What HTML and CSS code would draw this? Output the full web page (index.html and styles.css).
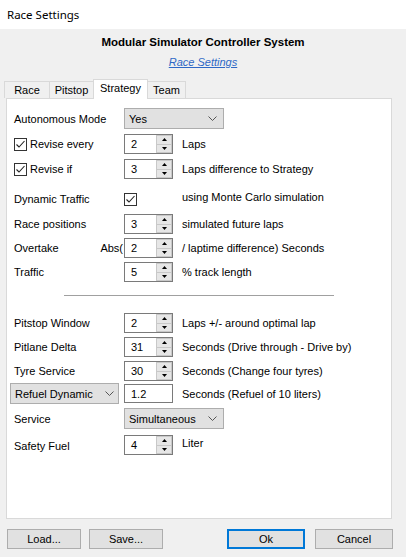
FILE: index.html
```html
<!DOCTYPE html>
<html>
<head>
<meta charset="utf-8">
<link rel="stylesheet" href="styles.css">
</head>
<body>
<div class="window">
  <div class="titlebar">Race Settings</div>
  <div class="header">
    <div class="heading">Modular Simulator Controller System</div>
    <div class="link-row"><a class="link">Race Settings</a></div>
  </div>
  <div class="tabs">
    <div class="tab t-race">Race</div>
    <div class="tab t-pit">Pitstop</div>
    <div class="tab t-strat selected">Strategy</div>
    <div class="tab t-team">Team</div>
  </div>
  <div class="panel">
    <div class="row r-auto">
      <div class="label">Autonomous Mode</div>
      <div class="dropdown dd-wide"><span>Yes</span><svg class="chev" width="9" height="5" viewBox="0 0 9 5"><path d="M0.5 0.5 L4.5 4.5 L8.5 0.5" fill="none" stroke="#555" stroke-width="1"/></svg></div>
    </div>
    <div class="row r-g5">
      <div class="label"><span class="check"><svg width="11" height="11" viewBox="0 0 11 11"><path d="M1.5 5.5 L4 8 L9.5 2" fill="none" stroke="#222" stroke-width="1.1"/></svg></span>Revise every</div>
      <div class="spin"><span class="val">2</span><span class="btns"><span class="up"><svg width="5" height="3" viewBox="0 0 5 3"><path d="M0 3 L2.5 0 L5 3Z" fill="#000"/></svg></span><span class="dn"><svg width="5" height="3" viewBox="0 0 5 3"><path d="M0 0 L2.5 3 L5 0Z" fill="#000"/></svg></span></span></div>
      <div class="note">Laps</div>
    </div>
    <div class="row r-g5">
      <div class="label"><span class="check"><svg width="11" height="11" viewBox="0 0 11 11"><path d="M1.5 5.5 L4 8 L9.5 2" fill="none" stroke="#222" stroke-width="1.1"/></svg></span>Revise if</div>
      <div class="spin"><span class="val">3</span><span class="btns"><span class="up"><svg width="5" height="3" viewBox="0 0 5 3"><path d="M0 3 L2.5 0 L5 3Z" fill="#000"/></svg></span><span class="dn"><svg width="5" height="3" viewBox="0 0 5 3"><path d="M0 0 L2.5 3 L5 0Z" fill="#000"/></svg></span></span></div>
      <div class="note">Laps difference to Strategy</div>
    </div>
    <div class="row r-g10">
      <div class="label">Dynamic Traffic</div>
      <div class="chkcell"><span class="check"><svg width="11" height="11" viewBox="0 0 11 11"><path d="M1.5 5.5 L4 8 L9.5 2" fill="none" stroke="#222" stroke-width="1.1"/></svg></span></div>
      <div class="note up1">using Monte Carlo simulation</div>
    </div>
    <div class="row r-g5">
      <div class="label">Race positions</div>
      <div class="spin"><span class="val">3</span><span class="btns"><span class="up"><svg width="5" height="3" viewBox="0 0 5 3"><path d="M0 3 L2.5 0 L5 3Z" fill="#000"/></svg></span><span class="dn"><svg width="5" height="3" viewBox="0 0 5 3"><path d="M0 0 L2.5 3 L5 0Z" fill="#000"/></svg></span></span></div>
      <div class="note">simulated future laps</div>
    </div>
    <div class="row r-g4">
      <div class="label split"><span>Overtake</span><span>Abs(</span></div>
      <div class="spin"><span class="val">2</span><span class="btns"><span class="up"><svg width="5" height="3" viewBox="0 0 5 3"><path d="M0 3 L2.5 0 L5 3Z" fill="#000"/></svg></span><span class="dn"><svg width="5" height="3" viewBox="0 0 5 3"><path d="M0 0 L2.5 3 L5 0Z" fill="#000"/></svg></span></span></div>
      <div class="note">/ laptime difference) Seconds</div>
    </div>
    <div class="row r-g4">
      <div class="label">Traffic</div>
      <div class="spin"><span class="val">5</span><span class="btns"><span class="up"><svg width="5" height="3" viewBox="0 0 5 3"><path d="M0 3 L2.5 0 L5 3Z" fill="#000"/></svg></span><span class="dn"><svg width="5" height="3" viewBox="0 0 5 3"><path d="M0 0 L2.5 3 L5 0Z" fill="#000"/></svg></span></span></div>
      <div class="note">% track length</div>
    </div>
    <div class="separator"></div>
    <div class="row r-sep">
      <div class="label">Pitstop Window</div>
      <div class="spin"><span class="val">2</span><span class="btns"><span class="up"><svg width="5" height="3" viewBox="0 0 5 3"><path d="M0 3 L2.5 0 L5 3Z" fill="#000"/></svg></span><span class="dn"><svg width="5" height="3" viewBox="0 0 5 3"><path d="M0 0 L2.5 3 L5 0Z" fill="#000"/></svg></span></span></div>
      <div class="note">Laps +/- around optimal lap</div>
    </div>
    <div class="row r-g4">
      <div class="label">Pitlane Delta</div>
      <div class="spin"><span class="val">31</span><span class="btns"><span class="up"><svg width="5" height="3" viewBox="0 0 5 3"><path d="M0 3 L2.5 0 L5 3Z" fill="#000"/></svg></span><span class="dn"><svg width="5" height="3" viewBox="0 0 5 3"><path d="M0 0 L2.5 3 L5 0Z" fill="#000"/></svg></span></span></div>
      <div class="note">Seconds (Drive through - Drive by)</div>
    </div>
    <div class="row r-g4">
      <div class="label">Tyre Service</div>
      <div class="spin"><span class="val">30</span><span class="btns"><span class="up"><svg width="5" height="3" viewBox="0 0 5 3"><path d="M0 3 L2.5 0 L5 3Z" fill="#000"/></svg></span><span class="dn"><svg width="5" height="3" viewBox="0 0 5 3"><path d="M0 0 L2.5 3 L5 0Z" fill="#000"/></svg></span></span></div>
      <div class="note">Seconds (Change four tyres)</div>
    </div>
    <div class="row r-refuel">
      <div class="dropdown dd-label"><span>Refuel Dynamic</span><svg class="chev" width="9" height="5" viewBox="0 0 9 5"><path d="M0.5 0.5 L4.5 4.5 L8.5 0.5" fill="none" stroke="#555" stroke-width="1"/></svg></div>
      <div class="edit"><span class="val">1.2</span></div>
      <div class="note">Seconds (Refuel of 10 liters)</div>
    </div>
    <div class="row r-service">
      <div class="label">Service</div>
      <div class="dropdown dd-wide"><span>Simultaneous</span><svg class="chev" width="9" height="5" viewBox="0 0 9 5"><path d="M0.5 0.5 L4.5 4.5 L8.5 0.5" fill="none" stroke="#555" stroke-width="1"/></svg></div>
    </div>
    <div class="row r-g6">
      <div class="label down2">Safety Fuel</div>
      <div class="spin"><span class="val">4</span><span class="btns"><span class="up"><svg width="5" height="3" viewBox="0 0 5 3"><path d="M0 3 L2.5 0 L5 3Z" fill="#000"/></svg></span><span class="dn"><svg width="5" height="3" viewBox="0 0 5 3"><path d="M0 0 L2.5 3 L5 0Z" fill="#000"/></svg></span></span></div>
      <div class="note up1">Liter</div>
    </div>
  </div>
  <div class="buttons">
    <div class="btn b-load">Load...</div>
    <div class="btn b-save">Save...</div>
    <div class="btn b-ok">Ok</div>
    <div class="btn b-cancel">Cancel</div>
  </div>
</div>
</body>
</html>
```
FILE: styles.css
```css
html, body {
  margin: 0;
  padding: 0;
}
body {
  width: 406px;
  height: 557px;
  background: #f0f0f0;
  font-family: "Liberation Sans", Arial, sans-serif;
  font-size: 11px;
  color: #000;
  overflow: hidden;
}
.window {
  width: 406px;
  height: 557px;
  display: flex;
  flex-direction: column;
}
.titlebar {
  height: 29px;
  line-height: 29px;
  background: #fff;
  padding-left: 7px;
  font-family: "Noto Sans", "Open Sans", sans-serif;
  font-size: 11.5px;
  color: #000;
}
.header {
  padding-top: 5px;
  text-align: center;
}
.heading {
  font-weight: bold;
  font-size: 11.5px;
  line-height: 16px;
}
.link-row {
  margin-top: 4px;
  line-height: 16px;
}
.link {
  color: #2e68c6;
  font-style: italic;
  text-decoration: underline;
  font-size: 11px;
}
.tabs {
  margin-top: 9px;
  height: 19px;
  padding-left: 4px;
  display: flex;
  align-items: flex-end;
}
.tab {
  box-sizing: border-box;
  height: 17px;
  border: 1px solid #d9d9d9;
  border-bottom: none;
  border-right: none;
  background: #f0f0f0;
  text-align: center;
  line-height: 16px;
  font-size: 11px;
}
.t-race { width: 45px; }
.t-pit { width: 44px; }
.t-strat { width: 55px; }
.t-team { width: 38px; border-right: 1px solid #d9d9d9; }
.tab.selected {
  height: 20px;
  background: #fff;
  margin-bottom: -1px;
  position: relative;
  z-index: 1;
  line-height: 16px;
  border-right: 1px solid #d9d9d9;
}
.tab.selected + .tab { border-left: none; }
.panel {
  box-sizing: border-box;
  margin-left: 6px;
  width: 386px;
  height: 421px;
  background: #fff;
  border: 1px solid #d9d9d9;
  padding: 9px 0 0 7px;
  display: flex;
  flex-direction: column;
}
.row {
  display: flex;
  align-items: center;
  height: 20px;
}
.r-auto { height: 21px; }
.r-g4 { margin-top: 4px; }
.r-g5 { margin-top: 5px; }
.r-g6 { margin-top: 6px; }
.r-g10 { margin-top: 10px; }
.r-sep { margin-top: 17px; }
.r-refuel { margin-top: 2px; height: 21px; }
.r-service { margin-top: 4px; height: 21px; }
.label {
  width: 110px;
  display: flex;
  align-items: center;
  white-space: nowrap;
}
.label.split {
  justify-content: space-between;
  padding-right: 1px;
  box-sizing: border-box;
}
.down2 { position: relative; top: 1px; }
.up1 { position: relative; top: -2px; }
.check {
  box-sizing: border-box;
  width: 13px;
  height: 13px;
  border: 1px solid #333;
  background: #fff;
  display: inline-flex;
  align-items: center;
  justify-content: center;
  margin-right: 3px;
}
.chkcell {
  width: 49px;
  display: flex;
  align-items: center;
}
.note {
  margin-left: 9px;
  white-space: nowrap;
}
.dropdown {
  box-sizing: border-box;
  height: 21px;
  background: #e1e1e1;
  border: 1px solid #adadad;
  display: flex;
  align-items: center;
  justify-content: space-between;
  padding: 0 6px 0 4px;
}
.dd-wide { width: 100px; }
.dd-label {
  width: 109px;
  margin-left: -4px;
  margin-right: 5px;
  padding-left: 4px;
  padding-right: 4px;
}
.chev { display: block; }
.spin, .edit {
  box-sizing: border-box;
  width: 49px;
  height: 20px;
  border: 1px solid #7a7a7a;
  background: #fff;
  display: flex;
  align-items: center;
  justify-content: space-between;
}
.edit { height: 19px; }
.val {
  padding-left: 6px;
}
.btns {
  width: 16px;
  height: 18px;
  display: flex;
  flex-direction: column;
}
.btns .up, .btns .dn {
  box-sizing: border-box;
  flex: 1;
  background: #e6e6e6;
  border: 1px solid #c8c8c8;
  display: flex;
  align-items: center;
  justify-content: center;
}
.btns .dn { border-top: none; }
.btns svg { display: block; }
.separator {
  margin-top: 13px;
  margin-left: 50px;
  width: 270px;
  height: 1px;
  background: #a0a0a0;
}
.buttons {
  margin-top: 10px;
  display: flex;
  padding-left: 7px;
}
.btn {
  box-sizing: border-box;
  height: 20px;
  background: #e1e1e1;
  border: 1px solid #adadad;
  text-align: center;
  line-height: 18px;
  font-size: 11px;
}
.b-load { width: 74px; }
.b-save { width: 74px; margin-left: 8px; }
.b-ok {
  width: 78px;
  margin-left: 64px;
  border: 2px solid #0078d7;
  line-height: 16px;
}
.b-cancel { width: 78px; margin-left: 10px; }
```
